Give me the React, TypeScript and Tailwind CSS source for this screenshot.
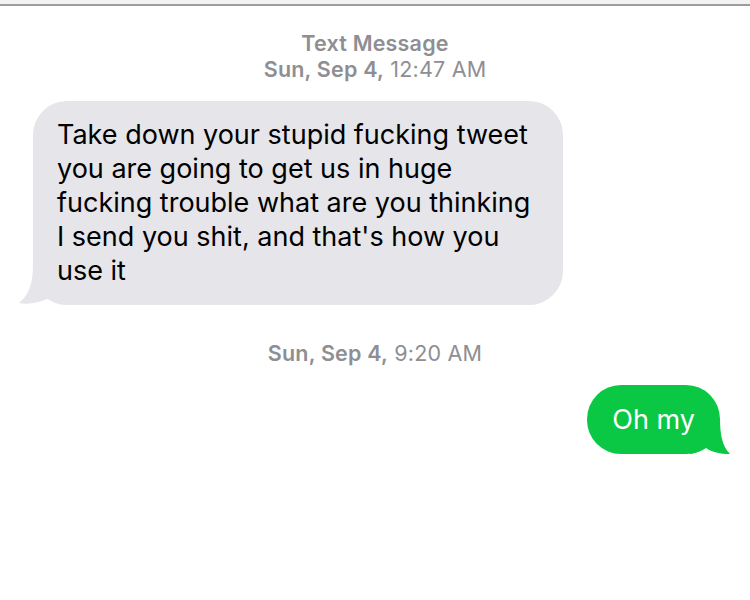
import React from "react";

const font = { fontFamily: "Inter, 'Noto Sans', sans-serif" };

export default function App() {
  return (
    <div className="w-[750px] h-[600px] bg-white overflow-hidden" style={font}>
      <div className="h-[4px] bg-[#f3f3f3]" />
      <div className="h-[2px] bg-[#9c9c9c]" />
      <div className="pt-[24px] flex flex-col items-center text-[21.5px] leading-[26px] tracking-[0.2px] text-[#8e8e93]">
        <div className="font-semibold">Text Message</div>
        <div>
          <span className="font-semibold">Sun, Sep 4,</span> 12:47 AM
        </div>
      </div>
      <div className="mt-[19px] pl-[33px]">
        <div className="relative w-[530px] rounded-[34px] bg-[#e5e5ea] pl-[24px] pr-[16px] pt-[17px] pb-[17px] text-[27px] leading-[34px] text-black">
          <svg
            className="absolute left-[-14px] bottom-0"
            width="50"
            height="40"
            viewBox="0 0 50 40"
          >
            <path
              d="M14 0 C14 18 10 30 0 38 C10 40 22 37 30 33 C36 36 42 38 50 40 L50 0 Z"
              fill="#e5e5ea"
            />
          </svg>
          <div className="relative">
            Take down your stupid fucking tweet
            <br />
            you are going to get us in huge
            <br />
            fucking trouble what are you thinking
            <br />
            I send you shit, and that's how you
            <br />
            use it
          </div>
        </div>
      </div>
      <div className="mt-[35px] flex justify-center text-[21.5px] leading-[26px] tracking-[0.2px] text-[#8e8e93]">
        <div>
          <span className="font-semibold">Sun, Sep 4,</span> 9:20 AM
        </div>
      </div>
      <div className="mt-[19px] flex justify-end pr-[30px]">
        <div className="relative rounded-[34px] bg-[#0ac844] px-[25px] pt-[18px] pb-[17px] text-[27px] leading-[34px] text-white">
          <svg
            className="absolute right-[-10px] bottom-0"
            width="40"
            height="36"
            viewBox="0 0 40 36"
          >
            <path
              d="M30 0 C30 16 32 28 40 36 C30 36 22 34 16 30 C12 33 6 35 0 36 L0 0 Z"
              fill="#0ac844"
            />
          </svg>
          <div className="relative">Oh my</div>
        </div>
      </div>
    </div>
  );
}
